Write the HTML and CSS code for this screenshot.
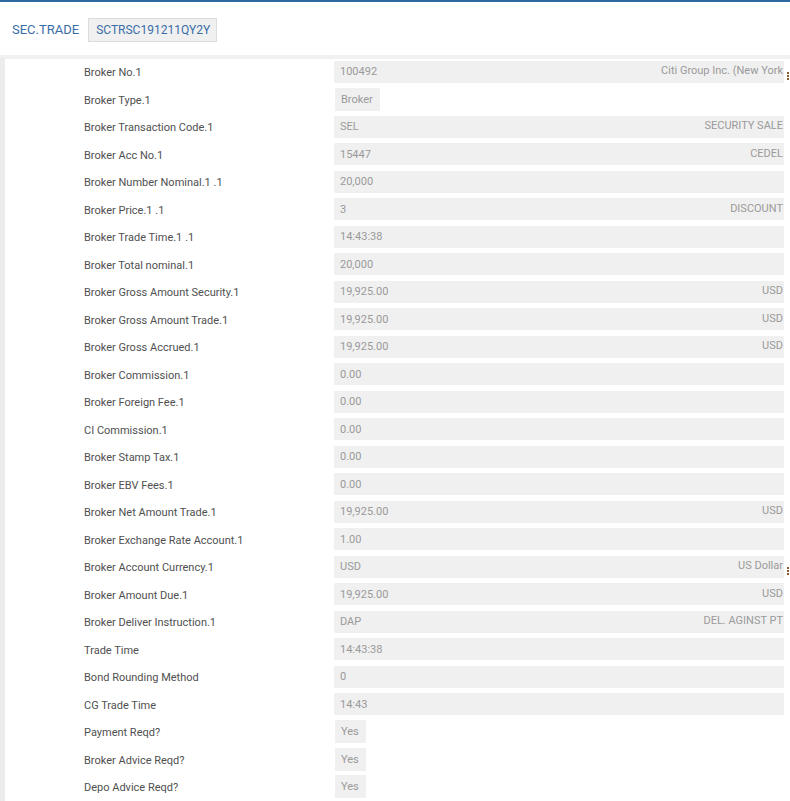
FILE: index.html
```html
<!DOCTYPE html>
<html>
<head>
<meta charset="utf-8">
<link rel="stylesheet" href="styles.css">
</head>
<body>
<header class="topbar">
  <span class="title">SEC.TRADE</span>
  <span class="badge">SCTRSC191211QY2Y</span>
</header>
<main class="content">
  <div class="row"><div class="label">Broker No.1</div><div class="field"><span>100492</span><span class="right">Citi Group Inc. (New York</span></div><span class="kebab"><i></i><i></i><i></i></span></div>
  <div class="row"><div class="label">Broker Type.1</div><div class="field short"><span>Broker</span></div></div>
  <div class="row"><div class="label">Broker Transaction Code.1</div><div class="field"><span>SEL</span><span class="right">SECURITY SALE</span></div></div>
  <div class="row"><div class="label">Broker Acc No.1</div><div class="field"><span>15447</span><span class="right">CEDEL</span></div></div>
  <div class="row"><div class="label">Broker Number Nominal.1 .1</div><div class="field"><span>20,000</span></div></div>
  <div class="row"><div class="label">Broker Price.1 .1</div><div class="field"><span>3</span><span class="right">DISCOUNT</span></div></div>
  <div class="row"><div class="label">Broker Trade Time.1 .1</div><div class="field"><span>14:43:38</span></div></div>
  <div class="row"><div class="label">Broker Total nominal.1</div><div class="field"><span>20,000</span></div></div>
  <div class="row"><div class="label">Broker Gross Amount Security.1</div><div class="field"><span>19,925.00</span><span class="right">USD</span></div></div>
  <div class="row"><div class="label">Broker Gross Amount Trade.1</div><div class="field"><span>19,925.00</span><span class="right">USD</span></div></div>
  <div class="row"><div class="label">Broker Gross Accrued.1</div><div class="field"><span>19,925.00</span><span class="right">USD</span></div></div>
  <div class="row"><div class="label">Broker Commission.1</div><div class="field"><span>0.00</span></div></div>
  <div class="row"><div class="label">Broker Foreign Fee.1</div><div class="field"><span>0.00</span></div></div>
  <div class="row"><div class="label">CI Commission.1</div><div class="field"><span>0.00</span></div></div>
  <div class="row"><div class="label">Broker Stamp Tax.1</div><div class="field"><span>0.00</span></div></div>
  <div class="row"><div class="label">Broker EBV Fees.1</div><div class="field"><span>0.00</span></div></div>
  <div class="row"><div class="label">Broker Net Amount Trade.1</div><div class="field"><span>19,925.00</span><span class="right">USD</span></div></div>
  <div class="row"><div class="label">Broker Exchange Rate Account.1</div><div class="field"><span>1.00</span></div></div>
  <div class="row"><div class="label">Broker Account Currency.1</div><div class="field"><span>USD</span><span class="right">US Dollar</span></div><span class="kebab"><i></i><i></i><i></i></span></div>
  <div class="row"><div class="label">Broker Amount Due.1</div><div class="field"><span>19,925.00</span><span class="right">USD</span></div></div>
  <div class="row"><div class="label">Broker Deliver Instruction.1</div><div class="field"><span>DAP</span><span class="right">DEL. AGINST PT</span></div></div>
  <div class="row"><div class="label">Trade Time</div><div class="field"><span>14:43:38</span></div></div>
  <div class="row"><div class="label">Bond Rounding Method</div><div class="field"><span>0</span></div></div>
  <div class="row"><div class="label">CG Trade Time</div><div class="field"><span>14:43</span></div></div>
  <div class="row"><div class="label">Payment Reqd?</div><div class="field short"><span>Yes</span></div></div>
  <div class="row"><div class="label">Broker Advice Reqd?</div><div class="field short"><span>Yes</span></div></div>
  <div class="row"><div class="label">Depo Advice Reqd?</div><div class="field short"><span>Yes</span></div></div>
</main>
</body>
</html>
```

FILE: styles.css
```css
html, body {
  margin: 0;
  padding: 0;
  background: #ffffff;
  font-family: Roboto, "Liberation Sans", sans-serif;
  overflow: hidden;
}

.topbar {
  height: 51px;
  border-top: 2px solid #2c6aa0;
  border-bottom: 4px solid #f1f1f1;
  display: flex;
  align-items: center;
  padding: 2px 0 0 12px;
  box-sizing: content-box;
  gap: 9px;
}

.title {
  font-size: 13px;
  color: #3a6ea8;
}

.badge {
  font-size: 12px;
  color: #3a6ea8;
  background: #f0f0f0;
  border: 1px solid #dcdcdc;
  height: 22px;
  line-height: 22px;
  padding: 0 6px 0 7px;
}

.content {
  border-left: 5px solid #ececec;
  min-height: 760px;
  margin-top: -1px;
}

.row {
  height: 27.5px;
  display: flex;
  align-items: center;
}

.label {
  width: 250px;
  padding-left: 79px;
  font-size: 11px;
  color: #505050;
  flex: none;
  position: relative;
  top: 1px;
}

.field {
  width: 450px;
  height: 22px;
  background: #f0f0f0;
  display: flex;
  align-items: center;
  justify-content: space-between;
  font-size: 11px;
  color: #9a9a9a;
  box-sizing: border-box;
  padding: 0 1px 0 6px;
  flex: none;
}

.field.short {
  width: auto;
  padding: 0 7px 0 6px;
  margin-left: 1px;
  height: 23px;
}

.right {
  text-align: right;
  position: relative;
  top: -1px;
}

.kebab {
  display: flex;
  flex-direction: column;
  gap: 1px;
  margin-left: 3px;
  position: relative;
  top: 4px;
}

.kebab i {
  display: block;
  width: 2px;
  height: 2px;
  background: #8a5a30;
}
```
